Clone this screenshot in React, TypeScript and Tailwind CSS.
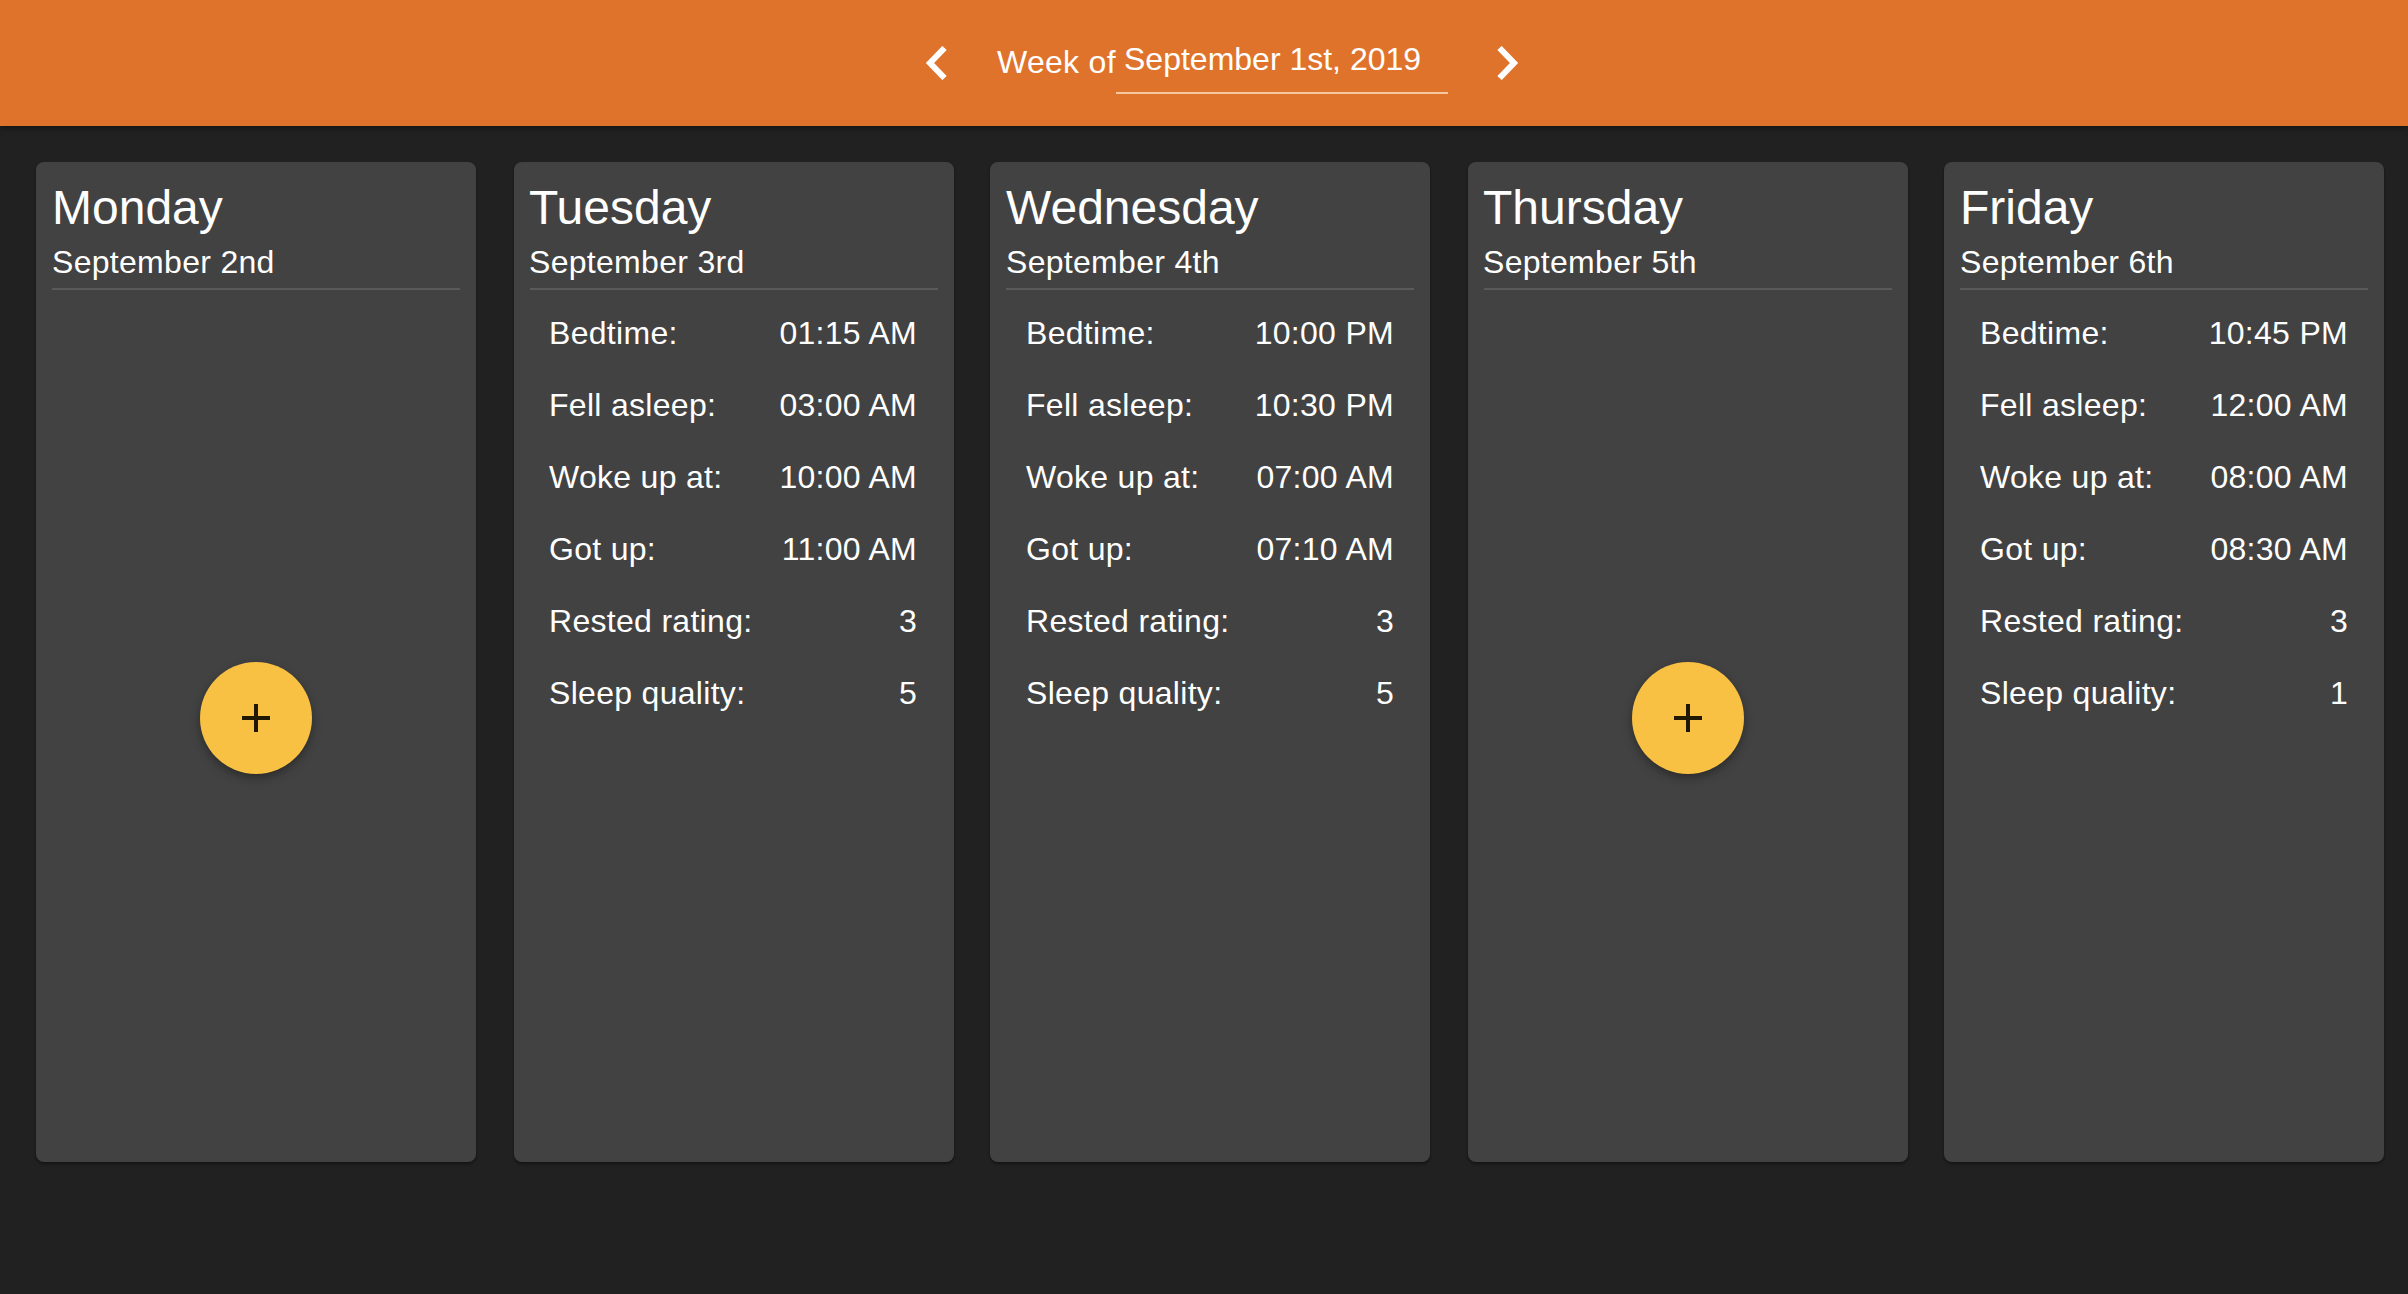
const days = [
  { name: "Monday", date: "September 2nd", m: "", t: "", r: "px-[20px]" },
  { name: "Tuesday", date: "September 3rd", m: "ml-[38px]", t: "-ml-px", r: "pl-[19px] pr-[21px]", v: ["01:15 AM", "03:00 AM", "10:00 AM", "11:00 AM", "3", "5"] },
  { name: "Wednesday", date: "September 4th", m: "ml-[36px]", t: "", r: "px-[20px]", v: ["10:00 PM", "10:30 PM", "07:00 AM", "07:10 AM", "3", "5"] },
  { name: "Thursday", date: "September 5th", m: "ml-[38px]", t: "-ml-px", r: "px-[20px]" },
  { name: "Friday", date: "September 6th", m: "ml-[36px]", t: "", r: "px-[20px]", v: ["10:45 PM", "12:00 AM", "08:00 AM", "08:30 AM", "3", "1"] },
];
const labels = ["Bedtime:", "Fell asleep:", "Woke up at:", "Got up:", "Rested rating:", "Sleep quality:"];

function Chevron({ dir }: { dir: "left" | "right" }) {
  return (
    <svg width="22" height="34" viewBox="0 0 22 34" className="block">
      <path d={dir === "left" ? "M19.5 2 L5 17 L19.5 32" : "M2.5 2 L17 17 L2.5 32"} fill="none" stroke="#fff" strokeWidth="6" />
    </svg>
  );
}

export default function App() {
  return (
    <div className="min-h-[1294px] bg-[#212121] text-white font-['Liberation_Sans',Arial,sans-serif]">
      <header className="h-[126px] bg-[#df732b] flex items-center pl-[925px] shadow-[0_2px_6px_rgba(0,0,0,0.4)]">
        <div className="w-[22px] mr-[50px]"><Chevron dir="left" /></div>
        <span className="text-[32px] leading-[36px] mt-[-3px] tracking-[0.3px] w-[119px]">Week of</span>
        <div className="w-[332px] h-[94px] self-start pt-[41px] border-b-2 border-[#f3c79f] pl-[8px] text-[32px] leading-[36px]">
          <span>September 1st, 2019</span>
        </div>
        <div className="w-[22px] ml-[49px]"><Chevron dir="right" /></div>
      </header>
      <main className="flex pl-[36px] pr-[24px] pt-[36px]">
        {days.map((d) => (
          <section key={d.name} className={`${d.m} w-[440px] h-[1000px] bg-[#424242] rounded-[8px] shadow-[0_2px_3px_rgba(0,0,0,0.4)] px-[16px] pt-[18px] flex flex-col`}>
            <h2 className={`${d.t} text-[48px] leading-[56px]`}>{d.name}</h2>
            <p className={`${d.t} text-[32px] leading-[38px] mt-[7px] tracking-[0.3px]`}>{d.date}</p>
            <div className="h-[2px] bg-[#5a5a5a] mt-[7px]" />
            {d.v ? (
              <dl className={`${d.r} pt-[7px]`}>
                {labels.map((l, i) => (
                  <div key={l} className="flex justify-between items-center h-[72px] text-[32px] tracking-[0.3px]">
                    <dt>{l}</dt>
                    <dd>{d.v[i]}</dd>
                  </div>
                ))}
              </dl>
            ) : (
              <div className="flex justify-center pt-[372px]">
                <button className="w-[112px] h-[112px] rounded-full bg-[#f8c144] flex items-center justify-center shadow-[0_4px_10px_rgba(0,0,0,0.35)]">
                  <svg width="28" height="28" viewBox="0 0 28 28"><path d="M14 0V28M0 14H28" stroke="#201800" strokeWidth="4" /></svg>
                </button>
              </div>
            )}
          </section>
        ))}
      </main>
    </div>
  );
}
